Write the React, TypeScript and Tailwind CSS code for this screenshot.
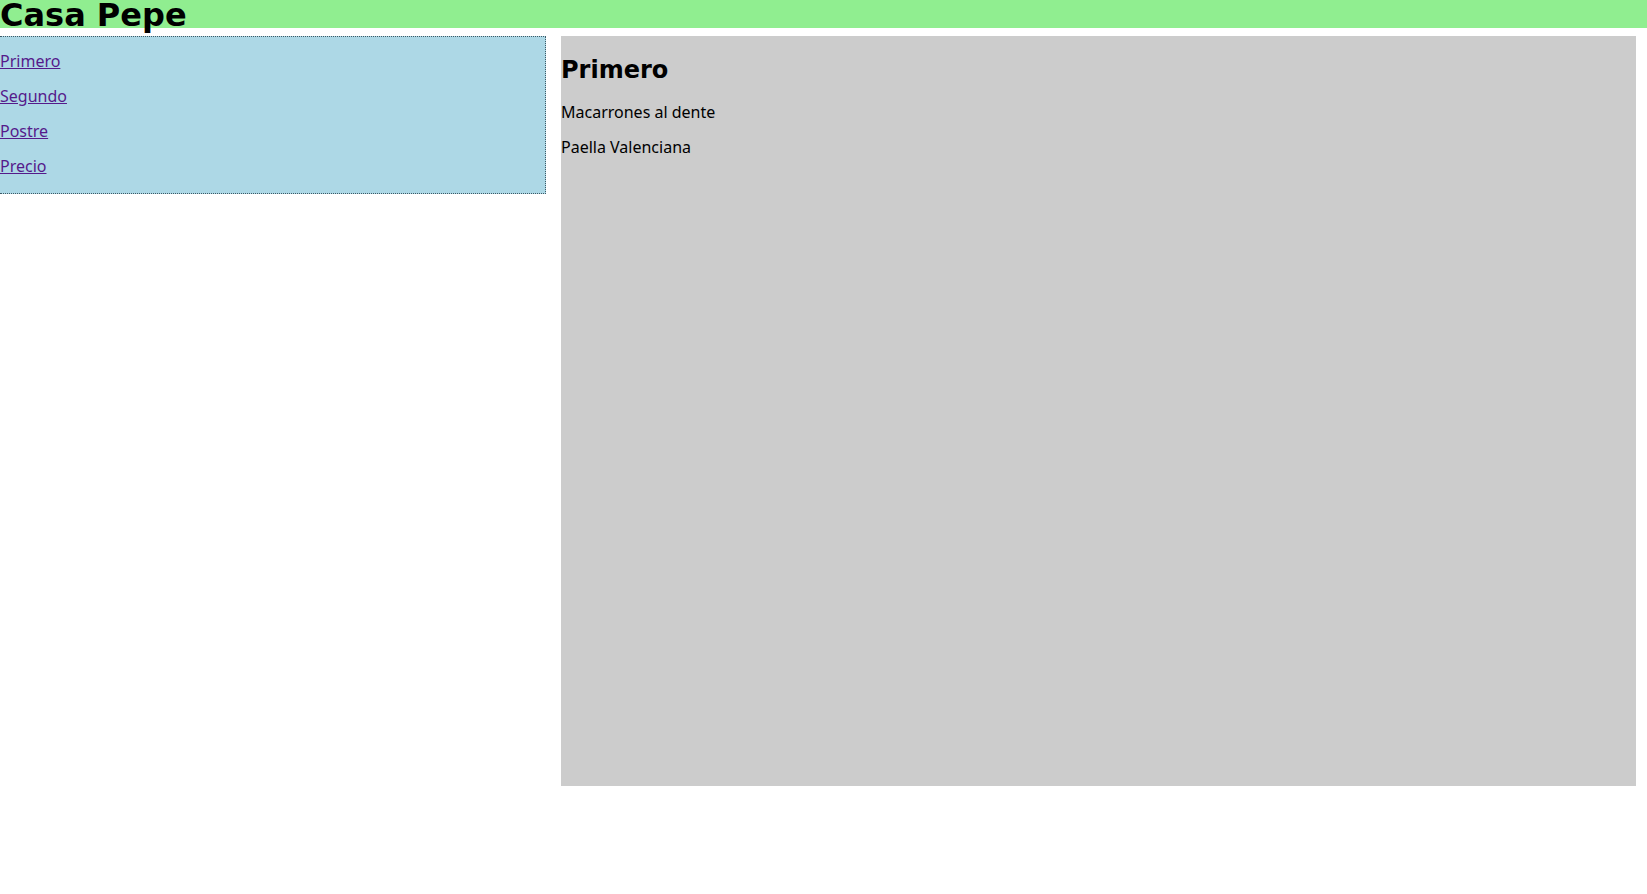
export default function App() {
  const links = ['Primero', 'Segundo', 'Postre', 'Precio'];

  return (
    <div className="min-h-[894px] bg-white text-black font-['DejaVu_Sans',sans-serif] text-[16px]">
      {/* top bar */}
      <header className="h-[28px] bg-[#90ee90]">
        <h1 className="m-0 text-[32px] font-bold leading-[30px] whitespace-nowrap">Casa Pepe</h1>
      </header>

      <div className="mt-[8px] flex items-start">
        {/* menu */}
        <nav className="w-[546px] shrink-0 flow-root pb-[3px] bg-[#add8e6] border-t border-r border-b border-dotted border-[#3d5a66]">
          {links.map((l) => (
            <p key={l} className="my-[13px] leading-[22px] font-['Noto_Sans',sans-serif]">
              <a href="#" className="text-[#551a8b] underline">
                {l}
              </a>
            </p>
          ))}
        </nav>

        {/* content */}
        <main className="ml-[15px] w-[1075px] h-[750px] flow-root bg-[#cccccc]">
          <h2 className="mt-[20px] mb-[17px] text-[24px] font-bold leading-[28px]">Primero</h2>
          <p className="my-[13px] leading-[22px] font-['Noto_Sans',sans-serif]">Macarrones al dente</p>
          <p className="my-[13px] leading-[22px] font-['Noto_Sans',sans-serif]">Paella Valenciana</p>
        </main>
      </div>
    </div>
  );
}
